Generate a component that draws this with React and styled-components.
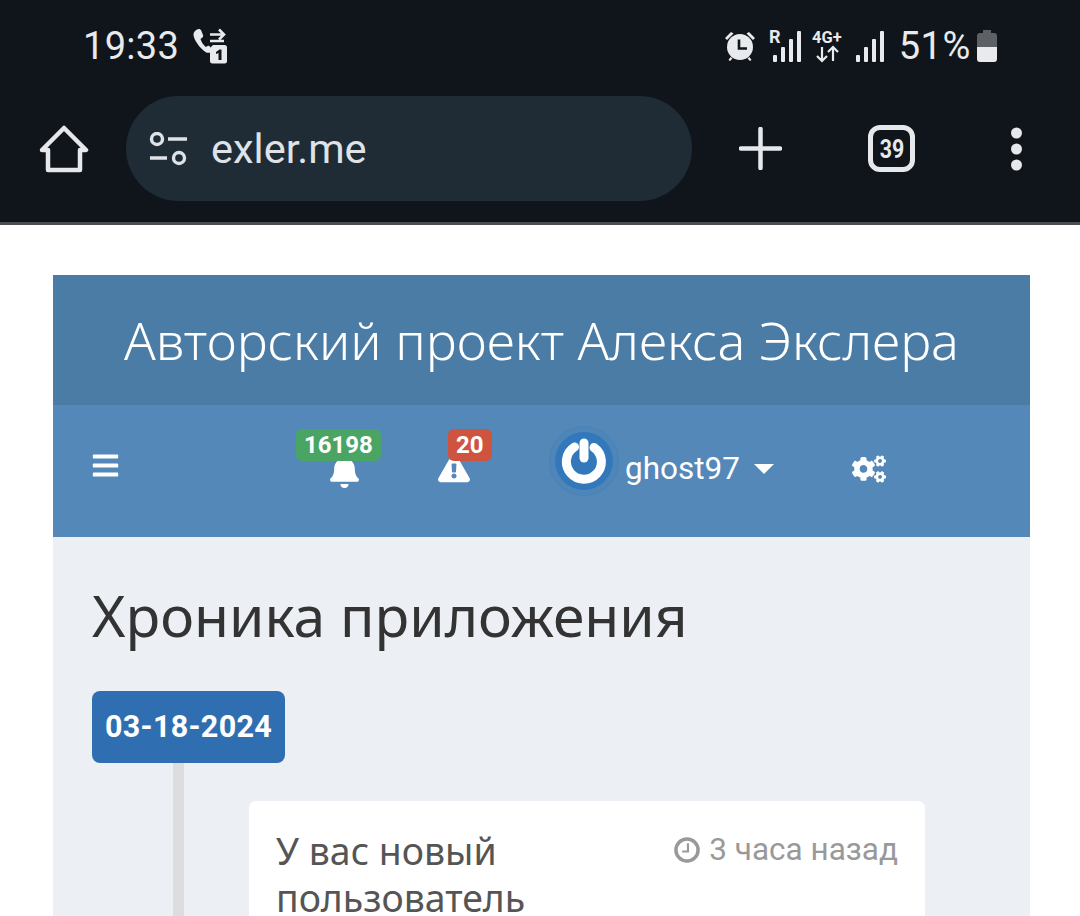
import React from "react";
import styled, { createGlobalStyle } from "styled-components";
import { FaBars, FaBell, FaExclamationTriangle, FaCogs } from "react-icons/fa";

const GlobalStyle = createGlobalStyle`
	html, body {
		margin: 0;
		height: 916px;
		overflow: hidden;
		background: #fff;
		font-family: "Roboto", sans-serif;
	}
`;

const Chrome = styled.header`
	background: #0f151a;
	height: 222px;
	border-bottom: 3px solid #4a4e52;
	color: #e6e8eb;
`;
const StatusBar = styled.div`
	height: 96px;
	display: flex;
	align-items: center;
	justify-content: space-between;
	padding: 0 82px 4px 83px;
	box-sizing: border-box;
`;
const StatusGroup = styled.div`
	display: flex;
	align-items: center;
`;
const StatusText = styled.span`
	font-size: 38px;
	letter-spacing: ${(p) => p.$spacing || 0.3}px;
	margin-left: ${(p) => p.$gap || 0}px;
	color: #e8eaed;
`;
const StatusGap = styled.span`
	width: 13px;
`;
const Toolbar = styled.div`
	height: 105px;
	display: flex;
	align-items: center;
	padding-left: 39px;
`;
const UrlPill = styled.div`
	width: 566px;
	height: 105px;
	margin-left: 37px;
	border-radius: 53px;
	background: #1f2c36;
	display: flex;
	align-items: center;
	padding-left: 22px;
	box-sizing: border-box;
`;
const UrlText = styled.span`
	font-size: 41.500px;
	color: #dfe3e7;
	margin-left: 21px;
`;
const ToolButton = styled.div`
	display: flex;
	align-items: center;
	justify-content: center;
	margin-left: ${(p) => p.$gap}px;
`;
const TabCount = styled.div`
	width: 47px;
	height: 47px;
	box-sizing: border-box;
	border: 5px solid #e6e8eb;
	border-radius: 12px;
	display: flex;
	align-items: center;
	justify-content: center;
	font-size: 26px;
	font-weight: 700;
	span {
		transform: scaleX(0.82);
	}
`;

const Page = styled.main`
	padding: 50px 50px 0 53px;
`;
const Title = styled.div`
	height: 130px;
	background: #4a7ca6;
	color: #fff;
	font-family: "Noto Sans", sans-serif;
	font-size: 52.200px;
	font-weight: 300;
	display: flex;
	align-items: center;
	justify-content: center;
	padding-bottom: 2px;
	box-sizing: border-box;
`;
const Nav = styled.nav`
	height: 132px;
	background: #5488b8;
	color: #fff;
	display: flex;
	align-items: center;
	padding: 0 0 12px 38px;
	box-sizing: border-box;
`;
const NavIcon = styled.div`
	position: relative;
	display: flex;
	margin-left: ${(p) => p.$gap}px;
	font-size: ${(p) => p.$size}px;
	padding-top: ${(p) => p.$top || 0}px;
`;
const Badge = styled.span`
	position: absolute;
	top: ${(p) => p.$top}px;
	left: ${(p) => p.$left}px;
	height: 32px;
	padding: 0 8px;
	border-radius: 6px;
	background: ${(p) => p.$color};
	font-size: 24px;
	font-weight: 700;
	line-height: 32px;
`;
const UserMenu = styled.div`
	display: flex;
	align-items: center;
	margin-left: 85px;
`;
const Avatar = styled.div`
	width: 58px;
	height: 58px;
	margin-bottom: 8px;
	border-radius: 50%;
	background: #3278ba;
	box-shadow: 0 0 0 5px #4f86b9, 0 0 0 6px #4a82b8;
	display: flex;
	align-items: center;
	justify-content: center;
`;
const UserName = styled.span`
	font-size: 31.500px;
	margin-left: 12px;
	padding-top: 6px;
`;
const Caret = styled.span`
	width: 0;
	height: 0;
	margin: 8px 0 0 14px;
	border-left: 10.500px solid transparent;
	border-right: 10.500px solid transparent;
	border-top: 10px solid #fff;
`;
const Content = styled.section`
	background: #ecf0f5;
	height: 400px;
	padding: 42px 39px 0;
	box-sizing: border-box;
`;
const Heading = styled.h1`
	margin: 0;
	font-family: "Noto Sans", sans-serif;
	font-size: 57px;
	font-weight: 400;
	line-height: 72px;
	color: #333;
`;
const Timeline = styled.div`
	margin-top: 40px;
	position: relative;
`;
const Rail = styled.div`
	position: absolute;
	left: 81px;
	top: 60px;
	width: 11px;
	height: 300px;
	background: #ddd;
`;
const DateTag = styled.div`
	position: relative;
	display: inline-block;
	background: #2f6fb1;
	color: #fff;
	font-size: 30.500px;
	font-weight: 700;
	line-height: 72px;
	height: 72px;
	padding: 0 13px;
	border-radius: 8px;
	letter-spacing: 0.3px;
`;
const Item = styled.article`
	position: relative;
	margin: 38px 66px 0 157px;
	height: 200px;
	background: #fff;
	border-radius: 7px;
	padding: 26px 27px;
	box-sizing: border-box;
	display: flex;
	justify-content: space-between;
	align-items: flex-start;
`;
const ItemTitle = styled.div`
	width: 290px;
	font-family: "Noto Sans", sans-serif;
	font-size: 37.400px;
	line-height: 47px;
	color: #555;
`;
const ItemTime = styled.div`
	display: flex;
	align-items: center;
	gap: 9px;
	font-size: 31.500px;
	line-height: 46px;
	color: #999;
	white-space: nowrap;
`;

const PhoneForwardIcon = () => (
	<svg width="36" height="36" viewBox="0 0 36 36" style={{ marginLeft: 14 }} fill="#e8eaed">
		<path d="M4 1.500c2-1 3.600-.6 4.200 1l1.800 4.500c.4 1 .2 1.800-.6 2.400L7.500 11c1 3.200 2.800 6 5.300 8l1.800-1c.8-.4 1.700-.3 2.300.5l1.600 2.700c.6 1 .4 2-.5 2.700-2 1.300-3.700 1.200-5.500 0C6.500 20 1 12 .500 7 .300 4.500 2 2.500 4 1.500z" />
		<path d="M17 6.500h14M26 1.500l5 5-5 5M17 13h14" stroke="#e8eaed" strokeWidth="2.600" fill="none" />
		<path d="M20 17h11.500a2.500 2.500 0 0 1 2.500 2.500V33a2.500 2.500 0 0 1-2.500 2.500H19.500A2.500 2.500 0 0 1 17 33V20z" />
		<path d="M23 24l3.500-2.500h2V32h-3v-7L23 26z" fill="#0f151a" />
	</svg>
);

const AlarmIcon = () => (
	<svg width="32" height="32" viewBox="0 0 32 32" fill="#e8eaed">
		<circle cx="16" cy="17" r="13" />
		<path d="M1 8l6-6 2.500 1.500-6.500 6.500zM31 8l-6-6-2.500 1.500 6.500 6.500zM6.500 27l-2 3 1.500 1 2.500-2.500zM25.500 27l2 3-1.500 1-2.500-2.500z" />
		<path d="M15 9.500v9h8" stroke="#0f151a" strokeWidth="2.600" fill="none" />
	</svg>
);

const SignalIcon = ({ roaming }) => (
	<svg width="32" height="34" viewBox="0 0 32 34" fill="#e8eaed">
		{roaming && (
			<text x="0" y="14" fontFamily="Roboto, sans-serif" fontSize="18" fontWeight="700" fill="#e8eaed">
				R
			</text>
		)}
		<rect x="4" y="26" width="4" height="7" rx="1" />
		<rect x="12" y="18" width="4" height="15" rx="1" />
		<rect x="20" y="10" width="4" height="23" rx="1" />
		<rect x="28" y="2" width="4" height="31" rx="1" />
	</svg>
);

const NetworkIcon = () => (
	<svg width="32" height="34" viewBox="0 0 32 34" fill="#e8eaed" style={{ margin: "0 8px 0 11px" }}>
		<text x="0" y="14" fontFamily="Roboto, sans-serif" fontSize="16.500" fontWeight="700" fill="#e8eaed">
			4G+
		</text>
		<path d="M10 18v14M5 27l5 5 5-5M21 32V18M16 23l5-5 5 5" stroke="#e8eaed" strokeWidth="2.200" fill="none" />
	</svg>
);

const BatteryIcon = () => (
	<svg width="22" height="34" viewBox="0 0 22 34" style={{ marginLeft: 5 }}>
		<path d="M7 1h8v3h3a3 3 0 0 1 3 3v11H1V7a3 3 0 0 1 3-3h3z" fill="#5d6165" />
		<path d="M1 18h20v12a3 3 0 0 1-3 3H4a3 3 0 0 1-3-3z" fill="#e8eaed" />
	</svg>
);

const HomeIcon = () => (
	<svg width="50" height="50" viewBox="0 0 50 50" fill="none" stroke="#e6e8eb" strokeWidth="4.500" strokeLinejoin="round" strokeLinecap="round">
		<path d="M3 26L25 4l22 22h-6v20H9V26z" />
	</svg>
);

const SiteSettingsIcon = () => (
	<svg width="42" height="34" viewBox="0 0 42 34" fill="none" stroke="#dfe3e7" strokeWidth="3.400">
		<circle cx="9" cy="7" r="5.500" />
		<path d="M20 7h19M2 26h17" />
		<circle cx="31" cy="26" r="5.500" />
	</svg>
);

const PlusIcon = () => (
	<svg width="43" height="43" viewBox="0 0 43 43" stroke="#e6e8eb" strokeWidth="4.500" strokeLinecap="round">
		<path d="M21.500 2v39M2 21.500h39" />
	</svg>
);

const MoreIcon = () => (
	<svg width="11" height="44" viewBox="0 0 11 44" fill="#e6e8eb">
		<circle cx="5.500" cy="6" r="5.500" />
		<circle cx="5.500" cy="22" r="5.500" />
		<circle cx="5.500" cy="38" r="5.500" />
	</svg>
);

const PowerIcon = () => (
	<svg width="46" height="46" viewBox="0 0 46 46" fill="none" stroke="#fff" strokeWidth="9" strokeLinecap="round">
		<path d="M13.500 9a17.500 17.500 0 1 0 19.500 .500" />
		<path d="M23 5v15" />
	</svg>
);

const ClockIcon = () => (
	<svg width="26" height="26" viewBox="0 0 27 27" fill="none" stroke="#999">
		<circle cx="13.500" cy="13.500" r="11.500" strokeWidth="3.600" />
		<path d="M14.500 6.500v8.500H8.500" strokeWidth="2.200" />
	</svg>
);

export default function App() {
	return (
		<>
			<GlobalStyle />
			<Chrome>
				<StatusBar>
					<StatusGroup>
						<StatusText>19:33</StatusText>
						<PhoneForwardIcon />
					</StatusGroup>
					<StatusGroup>
						<AlarmIcon />
						<StatusGap />
						<SignalIcon roaming />
						<NetworkIcon />
						<SignalIcon />
						<StatusText $gap={15} $spacing={0.6}>
							51%
						</StatusText>
						<BatteryIcon />
					</StatusGroup>
				</StatusBar>
				<Toolbar>
					<HomeIcon />
					<UrlPill>
						<SiteSettingsIcon />
						<UrlText>exler.me</UrlText>
					</UrlPill>
					<ToolButton $gap={47}>
						<PlusIcon />
					</ToolButton>
					<ToolButton $gap={86}>
						<TabCount>
							<span>39</span>
						</TabCount>
					</ToolButton>
					<ToolButton $gap={96}>
						<MoreIcon />
					</ToolButton>
				</Toolbar>
			</Chrome>
			<Page>
				<Title>Авторский проект Алекса Экслера</Title>
				<Nav>
					<FaBars size={29} />
					<NavIcon $gap={208} $size={33} $top={12}>
						<FaBell />
						<Badge $top={-14} $left={-32} $color="#4aa564">
							16198
						</Badge>
					</NavIcon>
					<NavIcon $gap={77} $size={32} $top={6}>
						<FaExclamationTriangle />
						<Badge $top={-17} $left={10} $color="#cf5440">
							20
						</Badge>
					</NavIcon>
					<UserMenu>
						<Avatar>
							<PowerIcon />
						</Avatar>
						<UserName>ghost97</UserName>
						<Caret />
					</UserMenu>
					<NavIcon $gap={78} $size={34} $top={8}>
						<FaCogs />
					</NavIcon>
				</Nav>
				<Content>
					<Heading>Хроника приложения</Heading>
					<Timeline>
						<Rail />
						<DateTag>03-18-2024</DateTag>
						<Item>
							<ItemTitle>У вас новый пользователь</ItemTitle>
							<ItemTime>
								<ClockIcon />3 часа назад
							</ItemTime>
						</Item>
					</Timeline>
				</Content>
			</Page>
		</>
	);
}
